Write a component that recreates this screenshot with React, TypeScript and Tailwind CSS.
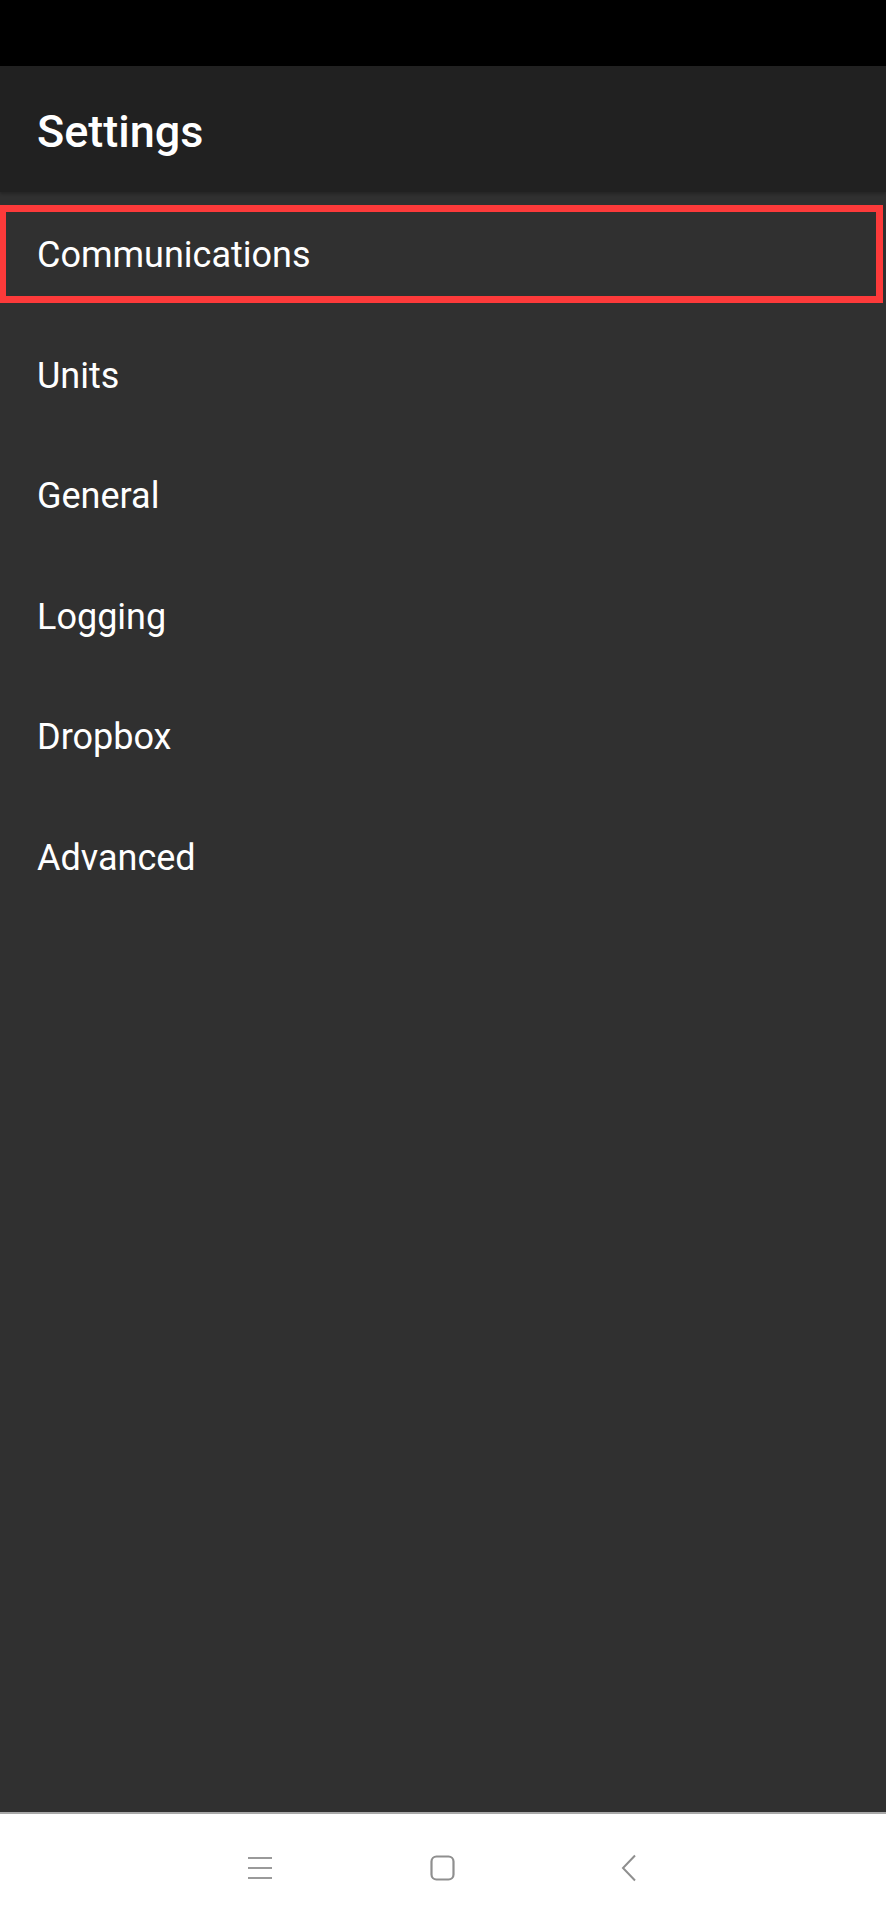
const items = ["Communications", "Units", "General", "Logging", "Dropbox", "Advanced"];

const NavBar = () => (
  <div className="h-[108px] bg-white border-t-2 border-[#a8a8a8] flex items-start pl-[247px]">
    <div className="flex items-center mt-[41px] h-[26px]">
      <svg width="26" height="26" viewBox="0 0 26 26">
        <path d="M1 3h24M1 13h24M1 23h24" stroke="#9a9a9a" strokeWidth="2" fill="none" />
      </svg>
      <svg width="25" height="26" viewBox="0 0 25 26" className="ml-[157px]">
        <rect x="1.5" y="1.5" width="22" height="23" rx="5" stroke="#8f8f8f" strokeWidth="2.2" fill="none" />
      </svg>
      <svg width="16" height="28" viewBox="0 0 16 28" className="ml-[166px]">
        <path d="M14 1.5 L2 14 L14 26.5" stroke="#8f8f8f" strokeWidth="2" fill="none" />
      </svg>
    </div>
  </div>
);

export default function App() {
  return (
    <div className="w-[886px] h-[1920px] flex flex-col bg-[#303030] font-['Roboto','Liberation_Sans',sans-serif] relative">
      <div className="h-[66px] bg-black" />
      <header className="h-[126px] bg-[#212121] flex items-center pl-[37px] shadow-[0_2px_3px_rgba(0,0,0,0.25)] z-10">
        <h1 className="text-[45px] font-medium text-white leading-none mt-[4px]">Settings</h1>
      </header>
      <ul className="flex-1 pt-[3px]">
        {items.map((item) => (
          <li key={item} className="h-[120.5px] flex items-center pl-[37px] text-[36px] text-white leading-none">
            {item}
          </li>
        ))}
      </ul>
      <div className="absolute left-0 top-[205px] w-[883px] h-[98px] border-[7px] border-l-[6px] border-[#fc3a3a] pointer-events-none" />
      <NavBar />
    </div>
  );
}
